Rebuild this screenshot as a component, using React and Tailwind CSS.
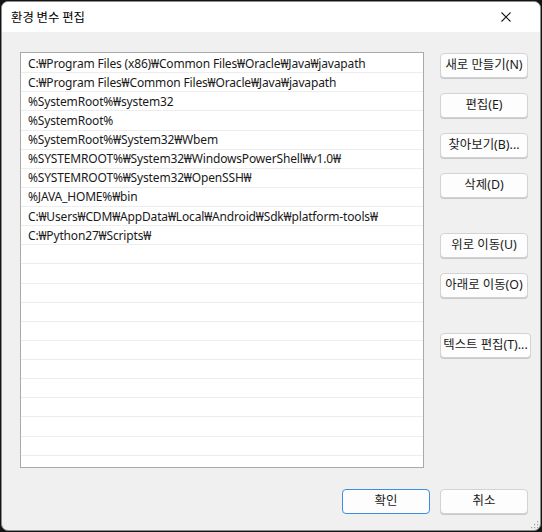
import React from "react";

const paths = [
  "C:₩Program Files (x86)₩Common Files₩Oracle₩Java₩javapath",
  "C:₩Program Files₩Common Files₩Oracle₩Java₩javapath",
  "%SystemRoot%₩system32",
  "%SystemRoot%",
  "%SystemRoot%₩System32₩Wbem",
  "%SYSTEMROOT%₩System32₩WindowsPowerShell₩v1.0₩",
  "%SYSTEMROOT%₩System32₩OpenSSH₩",
  "%JAVA_HOME%₩bin",
  "C:₩Users₩CDM₩AppData₩Local₩Android₩Sdk₩platform-tools₩",
  "C:₩Python27₩Scripts₩",
];

const rows = [...paths, ...Array(11).fill("")];

function Btn({ children, className = "" }) {
  return (
    <button
      className={
        "h-[25px] shrink-0 rounded-[4px] border border-[#d3d3d3] bg-[#fdfdfd] text-[12.4px] text-[#1a1a1a] shadow-[0_1px_0_#c8c8c8] " +
        className
      }
    >
      {children}
    </button>
  );
}

export default function App() {
  return (
    <div
      className="w-[542px] h-[532px] bg-[#141414] p-[1px]"
      style={{ fontFamily: '"Noto Sans", "Noto Sans CJK KR", sans-serif' }}
    >
      <div className="relative flex h-full w-full flex-col overflow-hidden rounded-[7px] border border-[#8c8c8c] bg-[#f0f0f0]">
        <div className="flex h-[30px] shrink-0 items-center justify-between bg-white pl-[9px] pr-[29px]">
          <span className="text-[12.4px] text-black" style={{ fontFamily: '"Noto Sans CJK KR", sans-serif' }}>
            환경 변수 편집
          </span>
          <svg width="10" height="10" viewBox="0 0 10 10">
            <path d="M0.5 0.5 L9.5 9.5 M9.5 0.5 L0.5 9.5" stroke="#1a1a1a" strokeWidth="1.1" />
          </svg>
        </div>
        <div className="flex flex-1 flex-col pl-[18px] pr-[10px] pt-[20px]">
          <div className="flex gap-[16px]">
            <div className="h-[416px] w-[404px] shrink-0 overflow-hidden border border-[#a9a9a9] bg-white pt-[1px]">
              {rows.map((p, i) => (
                <div
                  key={i}
                  className="flex h-[19.13px] items-center border-b border-[#ededed] pl-[7px] pt-[1px] text-[12px] leading-none tracking-[-0.16px] text-[#1a1a1a] whitespace-nowrap"
                >
                  {p}
                </div>
              ))}
            </div>
            <div className="flex flex-col items-start pt-[1px]">
              <Btn className="w-[88px]">새로 만들기(N)</Btn>
              <Btn className="mt-[15px] w-[88px]">편집(E)</Btn>
              <Btn className="mt-[15px] w-[88px]">찾아보기(B)...</Btn>
              <Btn className="mt-[15px] w-[88px]">삭제(D)</Btn>
              <Btn className="mt-[35px] w-[88px]">위로 이동(U)</Btn>
              <Btn className="mt-[15px] w-[88px]">아래로 이동(O)</Btn>
              <Btn className="mt-[35px] w-[91px]">텍스트 편집(T)...</Btn>
            </div>
          </div>
          <div className="mt-[21px] flex justify-end gap-[10px] pr-[2px]">
            <button className="h-[25px] w-[88px] rounded-[4px] border border-[#3b8ee0] bg-[#fdfdfd] text-[12.4px] text-[#1a1a1a]">
              확인
            </button>
            <Btn className="w-[88px]">취소</Btn>
          </div>
        </div>
        <svg className="absolute bottom-[1px] right-[1px]" width="8" height="8" viewBox="0 0 8 8">
          <rect x="6" y="0" width="1.2" height="1.2" fill="#a0a0a0" />
          <rect x="3" y="3" width="1.2" height="1.2" fill="#a0a0a0" />
          <rect x="6" y="3" width="1.2" height="1.2" fill="#a0a0a0" />
          <rect x="0" y="6" width="1.2" height="1.2" fill="#a0a0a0" />
          <rect x="3" y="6" width="1.2" height="1.2" fill="#a0a0a0" />
          <rect x="6" y="6" width="1.2" height="1.2" fill="#a0a0a0" />
        </svg>
      </div>
    </div>
  );
}
